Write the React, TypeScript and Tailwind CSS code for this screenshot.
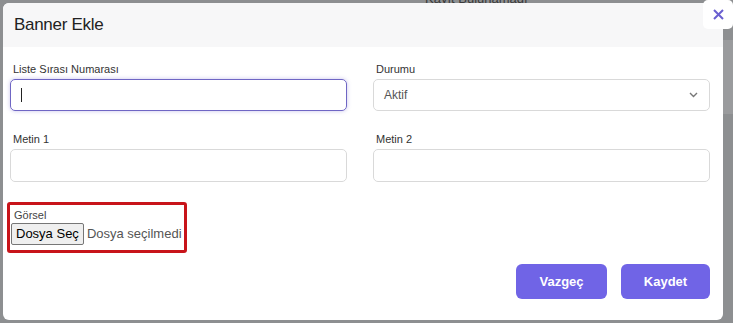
import React from "react";

function Field(props: { label: string; children: React.ReactNode }) {
  return (
    <div className="flex flex-col">
      <label className="text-[11px] leading-[14px] text-[#333] pl-[3px] mb-[3px]">{props.label}</label>
      {props.children}
    </div>
  );
}

export default function App() {
  return (
    <div
      className="relative w-[733px] h-[323px] overflow-hidden bg-[#8d8f91]"
      style={{ fontFamily: '"Liberation Sans", Arial, sans-serif' }}
    >
      <div className="absolute top-[-11px] left-[425px] text-[13px] text-[#3a3a3a]">Kayıt Bulunamadı</div>
      <div className="absolute right-0 top-[40px] w-[12px] h-[74px] bg-[#9a9b9d]" />

      <div className="relative ml-[3px] mt-[3px] w-[720px] h-[317px] bg-white rounded-[6px] overflow-hidden flex flex-col">
        <div className="h-[44px] bg-[#f7f7f8] flex items-center pl-[11px]">
          <h1 className="text-[17px] text-[#222] tracking-[-0.3px]">Banner Ekle</h1>
        </div>

        <div className="pl-[7px] pr-[13px] pt-[15px] flex flex-col">
          <div className="grid grid-cols-2 gap-x-[26px] gap-y-[21px]">
            <Field label="Liste Sırası Numarası">
              <div className="h-[32px] rounded-[5px] border border-[#6f66c4] shadow-[0_0_4px_rgba(100,90,200,0.35)] flex items-center pl-[10px]">
                <div className="w-px h-[14px] bg-[#222]" />
              </div>
            </Field>
            <Field label="Durumu">
              <div className="h-[32px] rounded-[5px] border border-[#d9d9d9] flex items-center justify-between pl-[10px] pr-[11px]">
                <span className="text-[12px] text-[#555]">Aktif</span>
                <svg width="9" height="6" viewBox="0 0 9 6" fill="none">
                  <path d="M1 1l3.5 3.5L8 1" stroke="#777" strokeWidth="1.4" />
                </svg>
              </div>
            </Field>
            <Field label="Metin 1">
              <div className="h-[33px] rounded-[5px] border border-[#d9d9d9]" />
            </Field>
            <Field label="Metin 2">
              <div className="h-[33px] rounded-[5px] border border-[#d9d9d9]" />
            </Field>
          </div>

          <div className="mt-[20px] ml-[-3px] w-[180px] h-[51px] border-[3px] border-[#c8141a] rounded-[3px] flex flex-col pl-[1px] pt-[4px]">
            <span className="text-[11px] leading-[13px] text-[#444] pl-[3px]">Görsel</span>
            <div className="flex items-center mt-[1px] whitespace-nowrap">
              <span className="h-[22px] px-[4px] bg-[#efefef] border border-[#767676] rounded-[2px] text-[13px] leading-[20px] text-black">
                Dosya Seç
              </span>
              <span className="ml-[3px] text-[13px] text-[#555]">Dosya seçilmedi</span>
            </div>
          </div>

          <div className="flex justify-end gap-[14px] mt-[11px]">
            <button className="w-[91px] h-[35px] rounded-[6px] bg-[#7064e6] text-white text-[13px] font-bold">Vazgeç</button>
            <button className="w-[89px] h-[35px] rounded-[6px] bg-[#7064e6] text-white text-[13px] font-bold">Kaydet</button>
          </div>
        </div>
      </div>

      <div className="absolute top-0 right-0 w-[30px] h-[29px] bg-white rounded-[5px] flex items-center justify-center">
        <svg width="11" height="11" viewBox="0 0 11 11">
          <path d="M1 1l9 9M10 1l-9 9" stroke="#6a5fd0" strokeWidth="2" />
        </svg>
      </div>
    </div>
  );
}
